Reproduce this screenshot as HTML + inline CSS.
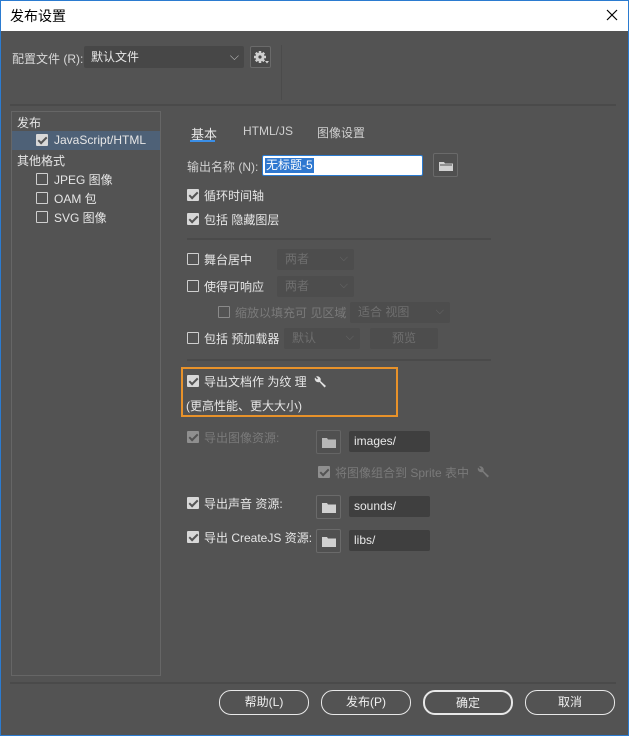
<!DOCTYPE html>
<html><head><meta charset="utf-8"><style>
*{margin:0;padding:0;box-sizing:border-box}
body{width:629px;height:736px;background:#535353;position:relative;overflow:hidden;font-family:"Liberation Sans","Noto Sans CJK SC",sans-serif;font-size:12px;color:#e6e6e6}
.a{position:absolute;white-space:nowrap}
.cb{position:absolute;width:12px;height:12px;border:1px solid #cfcfcf;border-radius:1px}
.cb.on{background:#d8d8d8;border-color:#d8d8d8}
.cb.on:after{content:"";position:absolute;left:3px;top:0px;width:3px;height:7px;border:solid #555;border-width:0 2px 2px 0;transform:rotate(45deg)}
.cb.dis{opacity:.45}
.dd{position:absolute;background:#4d4d4d;border-radius:2px;color:#6f6f6f;padding-left:8px;line-height:21px}
.dd:after{content:"⌵";position:absolute;right:6px;top:-1px;color:#6a6a6a;font-size:11px}
.inp{position:absolute;background:#3f3f3f;border-radius:2px;color:#e8e8e8;padding-left:5px;line-height:20px}
.fb{position:absolute;width:25px;height:24px;border:1px solid #6a6a6a;border-radius:2px;background:#505050}
.fb svg{position:absolute;left:5px;top:6px}
.btn{position:absolute;top:690px;width:90px;height:25px;border:1.5px solid #e8e8e8;border-radius:12px;text-align:center;line-height:22px;color:#f0f0f0}
.dim{color:#7a7a7a}
</style></head><body>
<div class="a" style="left:0;top:0;width:629px;height:31px;background:#fff;border-top:1px solid #2b7bd0"></div>
<div class="a" style="left:0;top:0;width:1px;height:736px;background:#2b7bd0"></div>
<div class="a" style="right:0;top:0;width:1px;height:736px;background:#2b7bd0"></div>
<div class="a" style="left:0;bottom:0;width:629px;height:1px;background:#2b7bd0"></div>
<div class="a" style="left:10px;top:6px;color:#000;font-size:14px">发布设置</div>
<svg class="a" style="left:606px;top:9px" width="12" height="12"><path d="M1 1L11 11M11 1L1 11" stroke="#000" stroke-width="1.2"/></svg>

<div class="a" style="left:12px;top:50px;color:#d8d8d8">配置文件 (R):</div>
<div class="a" style="left:84px;top:46px;width:160px;height:22px;background:#474747;border-radius:2px;color:#e8e8e8;padding-left:7px;line-height:22px">默认文件<span style="position:absolute;right:5px;top:-1px;color:#bbb">⌵</span></div>
<div class="a" style="left:250px;top:46px;width:21px;height:22px;border:1px solid #6a6a6a;border-radius:2px;background:#4a4a4a">
<svg style="position:absolute;left:2px;top:3px" width="16" height="15"><g fill="#d0d0d0"><circle cx="7" cy="7" r="4.5"/><g stroke="#d0d0d0" stroke-width="2.5"><path d="M7 1v12M1 7h12M2.8 2.8l8.4 8.4M11.2 2.8l-8.4 8.4"/></g></g><circle cx="7" cy="7" r="1.6" fill="#4a4a4a"/><path d="M12 11h4l-2 2.5z" fill="#d0d0d0"/></svg></div>
<div class="a" style="left:281px;top:45px;width:1px;height:55px;background:#4b4b4b"></div>
<div class="a" style="left:10px;top:104px;width:606px;height:2px;background:#4a4a4a"></div>

<div class="a" style="left:11px;top:111px;width:150px;height:565px;border:1px solid #666"></div>
<div class="a" style="left:17px;top:114px">发布</div>
<div class="a" style="left:12px;top:131px;width:148px;height:19px;background:#4e6177"></div>
<div class="cb on" style="left:36px;top:134px"></div>
<div class="a" style="left:54px;top:133px">JavaScript/HTML</div>
<div class="a" style="left:17px;top:152px">其他格式</div>
<div class="cb" style="left:36px;top:173px"></div><div class="a" style="left:54px;top:171px">JPEG 图像</div>
<div class="cb" style="left:36px;top:192px"></div><div class="a" style="left:54px;top:190px">OAM 包</div>
<div class="cb" style="left:36px;top:211px"></div><div class="a" style="left:54px;top:209px">SVG 图像</div>

<div class="a" style="left:191px;top:124px;font-size:13px">基本</div>
<div class="a" style="left:190px;top:140px;width:25px;height:2px;background:#3a8ee6"></div>
<div class="a" style="left:243px;top:124px;color:#d0d0d0">HTML/JS</div>
<div class="a" style="left:317px;top:124px;color:#d0d0d0">图像设置</div>

<div class="a" style="left:187px;top:158px;color:#d0d0d0">输出名称 (N):</div>
<div class="a" style="left:262px;top:155px;width:161px;height:21px;background:#fff;border:1px solid #2b7bd0;border-radius:2px"><span style="position:absolute;left:2px;top:2px;background:#2f78d0;color:#fff;line-height:15px;padding:0 1px">无标题-5</span></div>
<div class="fb" style="left:433px;top:153px"><svg width="14" height="11"><path d="M0 2h5l1 1.5h8V11H0z" fill="#d0d0d0"/><path d="M1 5h12" stroke="#505050"/></svg></div>

<div class="cb on" style="left:187px;top:189px"></div><div class="a" style="left:204px;top:187px">循环时间轴</div>
<div class="cb on" style="left:187px;top:213px"></div><div class="a" style="left:204px;top:211px">包括 隐藏图层</div>
<div class="a" style="left:187px;top:238px;width:304px;height:2px;background:#4a4a4a"></div>

<div class="cb" style="left:187px;top:253px"></div><div class="a" style="left:204px;top:251px">舞台居中</div>
<div class="dd" style="left:277px;top:249px;width:77px;height:21px">两者</div>
<div class="cb" style="left:187px;top:280px"></div><div class="a" style="left:204px;top:278px">使得可响应</div>
<div class="dd" style="left:277px;top:276px;width:77px;height:21px">两者</div>
<div class="cb dis" style="left:218px;top:306px"></div><div class="a dim" style="left:235px;top:304px">缩放以填充可 见区域</div>
<div class="dd" style="left:350px;top:302px;width:100px;height:21px">适合 视图</div>
<div class="cb" style="left:187px;top:332px"></div><div class="a" style="left:204px;top:330px">包括 预加载器</div>
<div class="dd" style="left:284px;top:328px;width:76px;height:21px">默认</div>
<div class="a" style="left:370px;top:328px;width:68px;height:21px;background:#4d4d4d;border-radius:2px;color:#6f6f6f;text-align:center;line-height:21px">预览</div>
<div class="a" style="left:187px;top:359px;width:304px;height:2px;background:#4a4a4a"></div>

<div class="a" style="left:181px;top:367px;width:217px;height:50px;border:2px solid #e8922a"></div>
<div class="cb on" style="left:187px;top:375px"></div><div class="a" style="left:204px;top:373px">导出文档作 为纹 理</div>
<svg class="a" style="left:313px;top:375px" width="14" height="14"><path d="M2 2.5a3.5 3.5 0 0 0 4.5 4.5L11.5 12.5l1.5-1.5L7.5 6A3.5 3.5 0 0 0 3 1.5l2 2-1 1z" fill="#e0e0e0"/></svg>
<div class="a" style="left:186px;top:397px">(更高性能、更大大小)</div>

<div class="cb on dis" style="left:187px;top:431px"></div><div class="a dim" style="left:204px;top:429px">导出图像资源:</div>
<div class="fb" style="left:316px;top:430px;opacity:.8"><svg width="14" height="11"><path d="M0 1h5l1 1.5h8V11H0z" fill="#d0d0d0"/></svg></div>
<div class="inp" style="left:349px;top:431px;width:81px;height:21px">images/</div>
<div class="cb on dis" style="left:318px;top:466px"></div><div class="a dim" style="left:335px;top:464px">将图像组合到 Sprite 表中</div>
<svg class="a" style="left:476px;top:465px" width="14" height="14"><path d="M2 2.5a3.5 3.5 0 0 0 4.5 4.5L11.5 12.5l1.5-1.5L7.5 6A3.5 3.5 0 0 0 3 1.5l2 2-1 1z" fill="#7a7a7a"/></svg>

<div class="cb on" style="left:187px;top:497px"></div><div class="a" style="left:204px;top:495px">导出声音 资源:</div>
<div class="fb" style="left:316px;top:495px"><svg width="14" height="11"><path d="M0 1h5l1 1.5h8V11H0z" fill="#d0d0d0"/></svg></div>
<div class="inp" style="left:349px;top:496px;width:81px;height:21px">sounds/</div>
<div class="cb on" style="left:187px;top:531px"></div><div class="a" style="left:204px;top:529px">导出 CreateJS 资源:</div>
<div class="fb" style="left:316px;top:529px"><svg width="14" height="11"><path d="M0 1h5l1 1.5h8V11H0z" fill="#d0d0d0"/></svg></div>
<div class="inp" style="left:349px;top:530px;width:81px;height:21px">libs/</div>

<div class="a" style="left:10px;top:682px;width:606px;height:2px;background:#4a4a4a"></div>
<div class="btn" style="left:219px">帮助(L)</div>
<div class="btn" style="left:321px">发布(P)</div>
<div class="btn" style="left:423px;border-width:2px">确定</div>
<div class="btn" style="left:525px">取消</div>
</body></html>
